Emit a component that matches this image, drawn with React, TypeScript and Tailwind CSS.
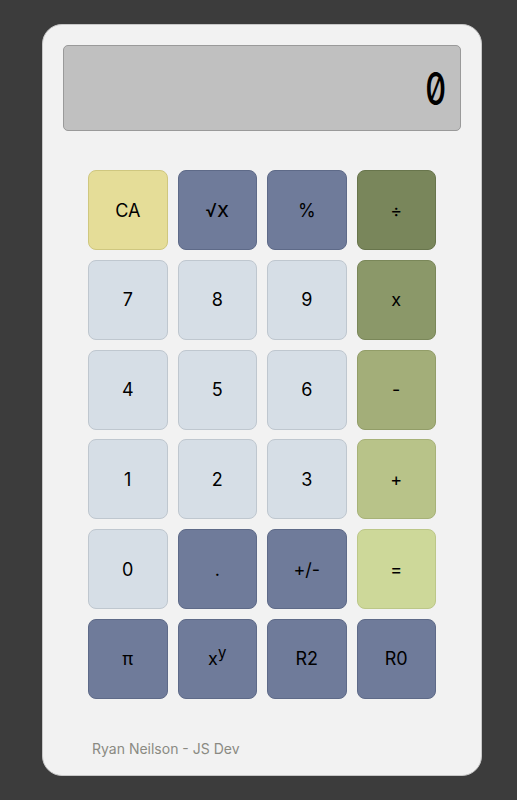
const keys: { label: React.ReactNode; cls: string }[] = [
  { label: 'CA', cls: 'bg-[#e5dd98] border-[#cfc77f]' },
  {
    label: (
      <span>
        √<span className="text-[22px] leading-none">x</span>
      </span>
    ),
    cls: 'bg-[#6f7b9a] border-[#5e6a88]',
  },
  { label: '%', cls: 'bg-[#6f7b9a] border-[#5e6a88]' },
  { label: '÷', cls: 'bg-[#79865b] border-[#68754c]' },
  { label: '7', cls: 'bg-[#d6dee6] border-[#bfc7cf]' },
  { label: '8', cls: 'bg-[#d6dee6] border-[#bfc7cf]' },
  { label: '9', cls: 'bg-[#d6dee6] border-[#bfc7cf]' },
  { label: 'x', cls: 'bg-[#8b9869] border-[#7a8759]' },
  { label: '4', cls: 'bg-[#d6dee6] border-[#bfc7cf]' },
  { label: '5', cls: 'bg-[#d6dee6] border-[#bfc7cf]' },
  { label: '6', cls: 'bg-[#d6dee6] border-[#bfc7cf]' },
  { label: '-', cls: 'bg-[#a3ae79] border-[#929d68]' },
  { label: '1', cls: 'bg-[#d6dee6] border-[#bfc7cf]' },
  { label: '2', cls: 'bg-[#d6dee6] border-[#bfc7cf]' },
  { label: '3', cls: 'bg-[#d6dee6] border-[#bfc7cf]' },
  { label: '+', cls: 'bg-[#b8c389] border-[#a7b278]' },
  { label: '0', cls: 'bg-[#d6dee6] border-[#bfc7cf]' },
  { label: '.', cls: 'bg-[#6f7b9a] border-[#5e6a88]' },
  { label: '+/-', cls: 'bg-[#6f7b9a] border-[#5e6a88]' },
  { label: '=', cls: 'bg-[#cdd899] border-[#bcc788]' },
  { label: 'π', cls: 'bg-[#6f7b9a] border-[#5e6a88]' },
  {
    label: (
      <span>
        x<sup className="text-[15px]">y</sup>
      </span>
    ),
    cls: 'bg-[#6f7b9a] border-[#5e6a88]',
  },
  { label: 'R2', cls: 'bg-[#6f7b9a] border-[#5e6a88]' },
  { label: 'R0', cls: 'bg-[#6f7b9a] border-[#5e6a88]' },
];

export default function App() {
  return (
    <div className="min-h-[800px] bg-[#3c3c3c] pt-6 pl-[42px] font-['Inter',sans-serif]">
      <div className="w-[440px] h-[752px] bg-[#f2f2f2] border border-[#c8c8c8] rounded-[20px] px-5 pt-5">
        {/* display */}
        <div className="h-[86px] bg-[#c0c0c0] border border-[#9a9a9a] rounded-[5px] flex items-center justify-end pr-[14px]">
          <span className="slashed-zero text-[45px] font-medium text-black leading-none scale-x-[0.72] origin-right">
            0
          </span>
        </div>
        <div className="mt-[39px] px-[25px] grid grid-cols-4 gap-x-[10px] gap-y-[9.8px]">
          {keys.map((k, i) => (
            <button
              key={i}
              className={`h-[80px] rounded-[8px] border flex items-center justify-center text-[18px] text-black ${k.cls}`}
            >
              {k.label}
            </button>
          ))}
        </div>
        <p className="mt-[39px] pl-[29px] text-[14px] text-[#8a8a82]">Ryan Neilson - JS Dev</p>
      </div>
    </div>
  );
}
